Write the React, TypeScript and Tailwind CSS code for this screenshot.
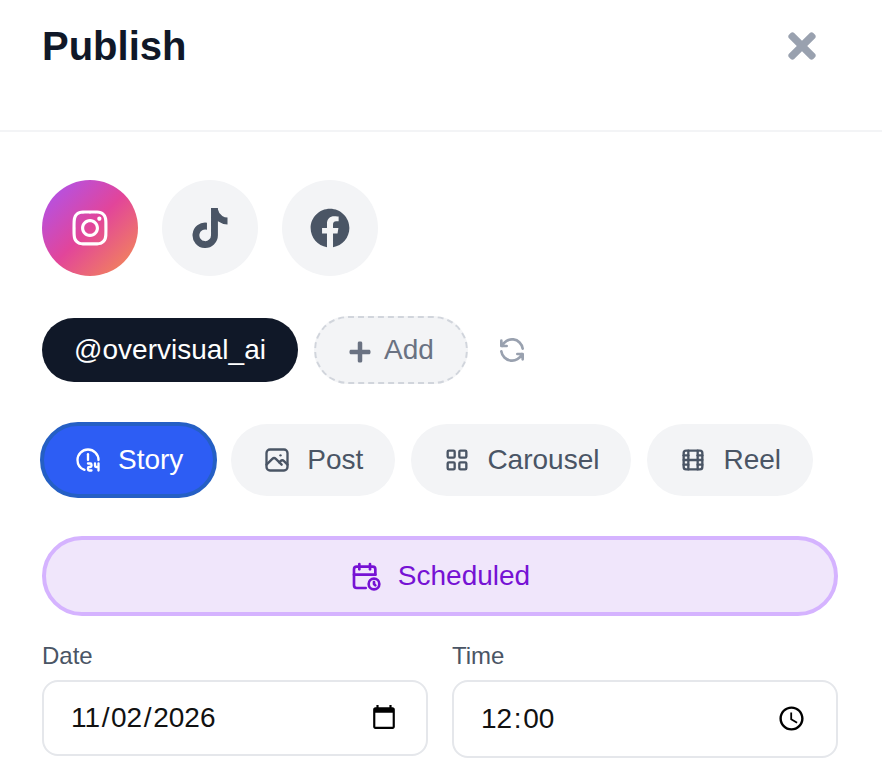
import type { ReactNode } from 'react';
import { FaFacebook, FaInstagram, FaPlus, FaTiktok, FaTimes } from 'react-icons/fa';
import { TbCalendarTime, TbClock24, TbLayoutGrid, TbMovie, TbPhoto, TbRefresh } from 'react-icons/tb';

const formats = [
  { label: 'Story', icon: TbClock24 },
  { label: 'Post', icon: TbPhoto },
  { label: 'Carousel', icon: TbLayoutGrid },
  { label: 'Reel', icon: TbMovie },
];

function NetworkButton({ active, label, children }: { active?: boolean; label: string; children: ReactNode }) {
  return (
    <button
      aria-label={label}
      className={`flex size-24 items-center justify-center rounded-full ${
        active
          ? 'bg-[linear-gradient(135deg,#a855f7,#e2459a_50%,#f5914e)] text-white'
          : 'bg-gray-100 text-gray-600'
      }`}
    >
      {children}
    </button>
  );
}

export default function App() {
  return (
    <div className="h-[776px] w-[882px] overflow-hidden bg-white font-['Liberation_Sans',Arial,sans-serif] text-[28px] leading-10">
      <header className="flex h-[132px] items-start justify-between border-b-2 border-gray-100 pt-[18px] pr-[60px] pl-[42px]">
        <h1 className="text-[40px] leading-14 font-bold text-gray-900">Publish</h1>
        <button aria-label="Close" className="mt-2 text-gray-400">
          <FaTimes size={40} />
        </button>
      </header>

      <main className="pt-12 pr-11 pl-[42px]">
        <div className="flex gap-6">
          <NetworkButton active label="Instagram">
            <FaInstagram size={40} />
          </NetworkButton>
          <NetworkButton label="TikTok">
            <FaTiktok size={40} />
          </NetworkButton>
          <NetworkButton label="Facebook">
            <FaFacebook size={40} />
          </NetworkButton>
        </div>

        <div className="mt-10 flex items-center gap-4">
          <button className="flex h-16 w-64 items-center justify-center rounded-full bg-gray-900 text-white">
            @overvisual_ai
          </button>
          <button className="flex h-[68px] w-[154px] items-center rounded-full border-2 border-dashed border-gray-300 bg-gray-100 pl-8 text-gray-500">
            <FaPlus size={24} className="mt-1 mr-3" />
            Add
          </button>
          <button aria-label="Refresh" className="ml-3 text-gray-400">
            <TbRefresh size={32} />
          </button>
        </div>

        <div className="mt-10 flex gap-4">
          {formats.map(({ label, icon: Icon }, i) => (
            <button
              key={label}
              className={`flex items-center gap-4 rounded-full ${
                i === 0
                  ? '-m-0.5 h-[76px] border-4 border-[#255fc4] bg-[#2d5df4] px-[30px] text-white'
                  : 'h-[72px] bg-gray-100 px-8 text-gray-600'
              }`}
            >
              <Icon size={28} />
              {label}
            </button>
          ))}
        </div>

        <button className="mt-10 flex h-20 w-full items-center justify-center gap-4 rounded-full border-4 border-[#d5b3ff] bg-[#f0e6fb] text-[#7612d4]">
          <TbCalendarTime size={32} />
          Scheduled
        </button>

        <div className="mt-6 grid grid-cols-2 items-start gap-6">
          <div>
            <div className="mb-2 text-2xl text-gray-600">Date</div>
            <div className="flex h-[76px] items-center justify-between rounded-2xl border-2 border-gray-200 pr-[29px] pl-[27px] text-[#111]">
              <div className="flex gap-[1.6px]">
                <span>11</span>
                <span>/</span>
                <span>02</span>
                <span>/</span>
                <span>2026</span>
              </div>
              <svg className="mb-0.5" width="26" height="26" viewBox="0 0 24 24" fill="black">
                <path d="M20 3h-1V1h-2v2H7V1H5v2H4c-1.1 0-2 .9-2 2v16c0 1.100.9 2 2 2h16c1.100 0 2-.9 2-2V5c0-1.100-.9-2-2-2zm0 18H4V8h16v13z" />
              </svg>
            </div>
          </div>
          <div>
            <div className="mb-2 text-2xl text-gray-600">Time</div>
            <div className="flex h-[78px] items-center justify-between rounded-2xl border-2 border-gray-200 pr-[30px] pl-[27px] text-[#111]">
              <div className="flex gap-[1.6px]">
                <span>12</span>
                <span>:</span>
                <span>00</span>
              </div>
              <svg className="mb-px" width="29" height="29" viewBox="0 0 24 24" fill="black">
                <path d="M12 2C6.480 2 2 6.480 2 12s4.480 10 10 10 10-4.480 10-10S17.520 2 12 2zm0 18c-4.420 0-8-3.580-8-8s3.580-8 8-8 8 3.580 8 8-3.580 8-8 8zm.5-13H11v6l5.250 3.150.75-1.230-4.500-2.670z" />
              </svg>
            </div>
          </div>
        </div>
      </main>
    </div>
  );
}
